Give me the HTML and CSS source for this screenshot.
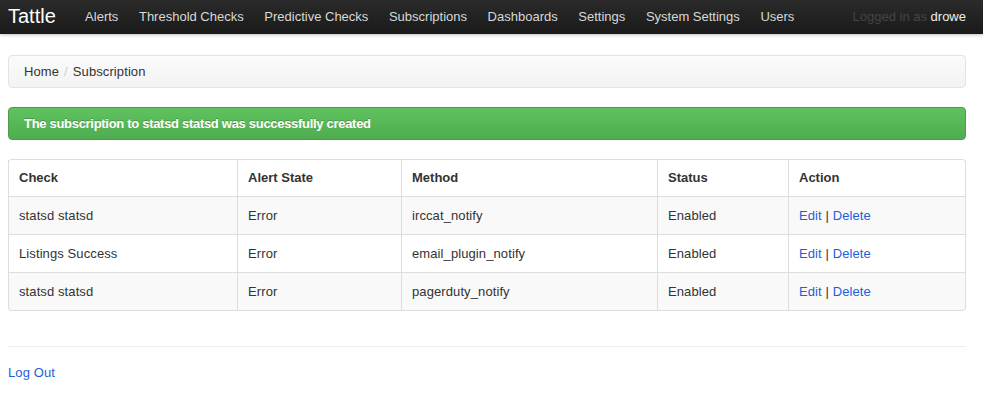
FILE: index.html
```
<!DOCTYPE html>
<html>
<head>
<meta charset="utf-8">
<title>Tattle</title>
<link rel="stylesheet" href="styles.css">
</head>
<body>
<div class="navbar">
  <a class="brand" href="#">Tattle</a>
  <ul class="nav">
    <li><a href="#">Alerts</a></li>
    <li><a href="#">Threshold Checks</a></li>
    <li><a href="#">Predictive Checks</a></li>
    <li><a href="#">Subscriptions</a></li>
    <li><a href="#">Dashboards</a></li>
    <li><a href="#">Settings</a></li>
    <li><a href="#">System Settings</a></li>
    <li><a href="#">Users</a></li>
  </ul>
  <div class="logged">Logged in as <span class="user">drowe</span></div>
</div>
<div class="container">
  <ul class="breadcrumb">
    <li>Home</li>
    <li class="sep">/</li>
    <li>Subscription</li>
  </ul>
  <div class="alert">The subscription to statsd statsd was successfully created</div>
  <table class="table">
    <colgroup>
      <col class="c1"><col class="c2"><col class="c3"><col class="c4"><col class="c5">
    </colgroup>
    <thead>
      <tr><th>Check</th><th>Alert State</th><th>Method</th><th>Status</th><th>Action</th></tr>
    </thead>
    <tbody>
      <tr><td>statsd statsd</td><td>Error</td><td>irccat_notify</td><td>Enabled</td><td><a href="#">Edit</a> | <a href="#">Delete</a></td></tr>
      <tr><td>Listings Success</td><td>Error</td><td>email_plugin_notify</td><td>Enabled</td><td><a href="#">Edit</a> | <a href="#">Delete</a></td></tr>
      <tr><td>statsd statsd</td><td>Error</td><td>pagerduty_notify</td><td>Enabled</td><td><a href="#">Edit</a> | <a href="#">Delete</a></td></tr>
    </tbody>
  </table>
  <hr class="rule">
  <a class="logout" href="#">Log Out</a>
</div>
</body>
</html>
```
FILE: styles.css
```
* { box-sizing: border-box; }
body {
  margin: 0;
  font-family: "Liberation Sans", Arial, sans-serif;
  font-size: 13px;
  letter-spacing: 0.1px;
  line-height: 20px;
  color: #333;
  background: #fff;
}
a { color: #1d60d8; text-decoration: none; }

.navbar {
  height: 34px;
  display: flex;
  align-items: center;
  padding: 0 17px 0 8px;
  background: linear-gradient(#2b2b2b, #1a1a1a);
  box-shadow: 0 1px 3px rgba(0,0,0,0.25);
}
.brand {
  color: #fff;
  font-size: 20px;
  letter-spacing: 0;
  line-height: 30px;
  margin-right: 19px;
  padding-bottom: 2px;
}
.nav {
  list-style: none;
  margin: 0;
  padding: 0;
  display: flex;
  flex: 1;
}
.nav a {
  display: block;
  color: #d8d8d8;
  letter-spacing: 0;
  padding: 0 10.3px;
  line-height: 30px;
}
.logged {
  color: #454545;
  letter-spacing: 0;
}
.logged .user { color: #eee; }

.container {
  padding: 21px 17px 0 8px;
}
.breadcrumb {
  list-style: none;
  margin: 0 0 19px;
  padding: 7px 15px;
  line-height: 17px;
  display: flex;
  gap: 5px;
  background: linear-gradient(#fbfbfb, #f3f3f3);
  border: 1px solid #e3e3e3;
  border-radius: 4px;
}
.breadcrumb .sep { color: #ccc; }

.alert {
  margin: 0 0 19px;
  padding: 6px 15px;
  line-height: 19px;
  font-weight: bold;
  letter-spacing: -0.3px;
  color: #fff;
  text-shadow: 0 -1px 0 rgba(0,0,0,0.2);
  background: linear-gradient(#5fc25f, #4fad4f);
  border: 1px solid #4a9e4a;
  border-radius: 4px;
}

.table {
  width: 100%;
  border-collapse: separate;
  border-spacing: 0;
  border: 1px solid #ddd;
  border-left: 0;
  border-radius: 4px;
  table-layout: fixed;
}
.c1 { width: 229px; }
.c2 { width: 164px; }
.c3 { width: 256px; }
.c4 { width: 131px; }
.table th, .table td {
  text-align: left;
  padding: 8px 10px;
  border-left: 1px solid #ddd;
  border-top: 1px solid #ddd;
}
.table th {
  border-top: 0;
  font-weight: bold;
  letter-spacing: 0;
  line-height: 20px;
}
.table td { line-height: 21px; }
.table tbody tr:nth-child(odd) td { background: #f9f9f9; }
.table tbody tr:last-child td:first-child { border-bottom-left-radius: 4px; }
.table tbody tr:last-child td:last-child { border-bottom-right-radius: 4px; }

.rule {
  margin: 35px 0 16px;
  border: 0;
  border-top: 1px solid #eee;
}
.logout { display: inline-block; }
```
